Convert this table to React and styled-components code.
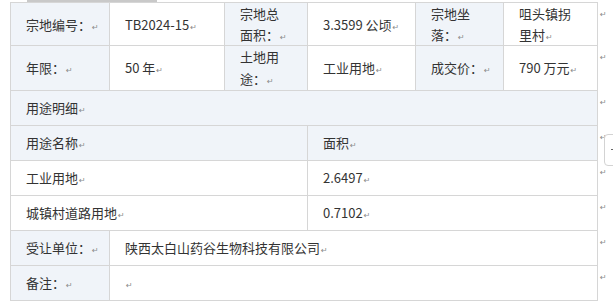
import React from 'react';
import styled, { createGlobalStyle } from 'styled-components';

const GlobalStyle = createGlobalStyle`
    body {
        margin: 0;
        background: #fff;
        font-family: "Noto Sans CJK SC", "Noto Sans", sans-serif;
    }
`;

const Page = styled.div`
    position: relative;
    width: 613px;
    height: 303px;
    overflow: hidden;
    padding: 2px 0 0 10px;
    box-sizing: border-box;
`;

const TopTab = styled.div`
    position: absolute;
    left: 27px;
    top: 0;
    width: 130px;
    height: 2px;
    background: #c9c9c9;
`;

const SideButton = styled.div`
    position: absolute;
    left: 604px;
    top: 134px;
    width: 20px;
    height: 30px;
    border: 1px solid #d3d3d3;
    border-radius: 4px;
    background: #fff;
    &::after {
        content: '';
        position: absolute;
        left: 6px;
        top: 14px;
        width: 4px;
        height: 1px;
        background: #666;
    }
`;

const Table = styled.table`
    width: 597px;
    border-collapse: collapse;
    table-layout: fixed;
    font-size: 13px;
    color: #333;
`;

const Row = styled.tr`
    height: ${props => props.h}px;
`;

const Cell = styled.td`
    border: 1px solid #d6d6d6;
    padding: 0 15px;
    line-height: ${props => props.tight ? 21 : 22}px;
    vertical-align: middle;
    white-space: nowrap;
    overflow: hidden;
    background: ${props => props.head ? '#f0f4f9' : '#fff'};
`;

const EndCell = styled.td`
    border: none;
    padding: 5px 0 0 1px;
    vertical-align: top;
    line-height: 8px;
`;

const Mark = styled.span`
    font-family: "DejaVu Sans", sans-serif;
    font-size: 8px;
    line-height: 0;
    color: #8a8a8a;
    margin-left: 1px;
`;

const P = ({ children }) => (
    <>
        {children}
        <Mark>↵</Mark>
    </>
);

const End = () => (
    <EndCell>
        <Mark>↵</Mark>
    </EndCell>
);

const App = () => {
    return (
        <Page>
            <GlobalStyle />
            <TopTab />
            <Table>
                <colgroup>
                    <col style={{ width: 99 }} />
                    <col style={{ width: 115 }} />
                    <col style={{ width: 83 }} />
                    <col style={{ width: 108 }} />
                    <col style={{ width: 88 }} />
                    <col style={{ width: 94 }} />
                    <col style={{ width: 10 }} />
                </colgroup>
                <tbody>
                    <Row h={42}>
                        <Cell head tight><P>宗地编号：</P></Cell>
                        <Cell tight><P>TB2024-15</P></Cell>
                        <Cell head tight>宗地总<br /><P>面积：</P></Cell>
                        <Cell tight><P>3.3599 公顷</P></Cell>
                        <Cell head tight>宗地坐<br /><P>落：</P></Cell>
                        <Cell tight>咀头镇拐<br /><P>里村</P></Cell>
                        <End />
                    </Row>
                    <Row h={44}>
                        <Cell head><P>年限：</P></Cell>
                        <Cell><P>50 年</P></Cell>
                        <Cell head>土地用<br /><P>途：</P></Cell>
                        <Cell><P>工业用地</P></Cell>
                        <Cell head><P>成交价：</P></Cell>
                        <Cell><P>790 万元</P></Cell>
                        <End />
                    </Row>
                    <Row h={35}>
                        <Cell head colSpan={6}><P>用途明细</P></Cell>
                        <End />
                    </Row>
                    <Row h={35}>
                        <Cell head colSpan={3}><P>用途名称</P></Cell>
                        <Cell head colSpan={3}><P>面积</P></Cell>
                        <End />
                    </Row>
                    <Row h={35}>
                        <Cell colSpan={3}><P>工业用地</P></Cell>
                        <Cell colSpan={3}><P>2.6497</P></Cell>
                        <End />
                    </Row>
                    <Row h={35}>
                        <Cell colSpan={3}><P>城镇村道路用地</P></Cell>
                        <Cell colSpan={3}><P>0.7102</P></Cell>
                        <End />
                    </Row>
                    <Row h={35}>
                        <Cell head><P>受让单位：</P></Cell>
                        <Cell colSpan={5}><P>陕西太白山药谷生物科技有限公司</P></Cell>
                        <End />
                    </Row>
                    <Row h={35}>
                        <Cell head><P>备注：</P></Cell>
                        <Cell colSpan={5}><P></P></Cell>
                        <End />
                    </Row>
                </tbody>
            </Table>
            <SideButton />
        </Page>
    );
};

export default App;
